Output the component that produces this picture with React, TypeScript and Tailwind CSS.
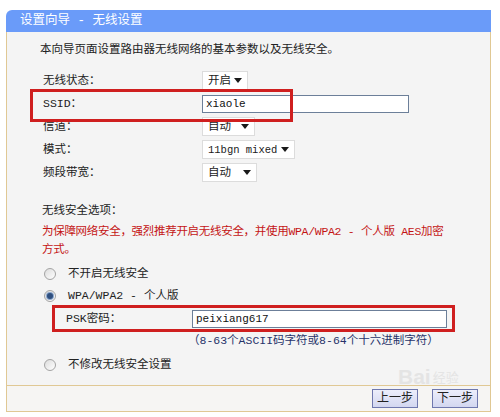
import type { ReactNode } from "react";

const FONT = "font-['Liberation_Mono','Noto_Sans_CJK_SC',monospace]";

const Arrow = () => (
  <svg width="8" height="5" viewBox="0 0 8 5" aria-hidden="true">
    <path d="M0 0h8L4 5z" fill="#1a1a1a" />
  </svg>
);

const FakeSelect = ({ value, className }: { value: string; className: string }) => (
  <div
    className={`flex h-[19px] items-center justify-between border border-[#dcdcdc] bg-white pl-[5px] pr-[5px] text-[#1a1a1a] ${className}`}>
    <span>{value}</span>
    <Arrow />
  </div>
);

const Radio = ({ checked = false }: { checked?: boolean }) => (
  <span className="flex h-[12px] w-[12px] items-center justify-center rounded-full border border-[#a3a3a3] bg-gradient-to-br from-[#dcdcdc] to-[#ffffff]">
    {checked ? (
      <span className="h-[6px] w-[6px] rounded-full bg-[#2f4f7f] ring-1 ring-[#8aa6cc]" />
    ) : null}
  </span>
);

const Row = ({ label, children }: { label: string; children: ReactNode }) => (
  <div className="flex h-[23px] items-center">
    <div className="w-[162px] pl-[3px] text-[#222]">{label}</div>
    {children}
  </div>
);

const RadioRow = ({ label, checked }: { label: string; checked?: boolean }) => (
  <div className="flex h-[22px] items-center pl-[4px]">
    <Radio checked={checked} />
    <span className="ml-[12px] text-[#222]">{label}</span>
  </div>
);

const WizardButton = ({ children }: { children: ReactNode }) => (
  <button
    type="button"
    className="flex h-[19px] w-[46px] items-center justify-center border border-[#6f78ae] bg-gradient-to-b from-[#eceefb] to-[#d3d7f0] text-[12px] text-[#222]">
    {children}
  </button>
);

export default function App() {
  return (
    <div className={`relative h-[417px] w-[500px] overflow-hidden bg-white pt-[10px] text-[11.5px] leading-[18px] ${FONT}`}>
      <div className="ml-[6px] w-[485px]">
        {/* title bar */}
        <div className="flex h-[22px] items-center rounded-tl-[6px] bg-[#6a9bf9] pl-[14px] text-[12.5px] text-white">
          设置向导 - 无线设置
        </div>

        {/* body */}
        <div className="h-[353px] border-x border-[#e0c894] bg-[#f4f4f4] pl-[33px] pt-[9px]">
          <div className="h-[18px] text-[#222]">本向导页面设置路由器无线网络的基本参数以及无线安全。</div>

          <div className="mt-[10px]">
            <Row label="无线状态：">
              <FakeSelect value="开启" className="w-[46px]" />
            </Row>
            <Row label="SSID：">
              <input
                readOnly
                defaultValue="xiaole"
                className="h-[18px] w-[207px] border border-[#6c7f99] bg-white pl-[3px] text-[11px] text-[#111] outline-none"
              />
            </Row>
            <Row label="信道：">
              <FakeSelect value="自动" className="w-[53px]" />
            </Row>
            <Row label="模式：">
              <FakeSelect value="11bgn mixed" className="w-[93px] text-[10.5px]" />
            </Row>
            <Row label="频段带宽：">
              <FakeSelect value="自动" className="w-[55px]" />
            </Row>
          </div>

          <div className="mt-[18px] h-[18px] pl-[2px] text-[#222]">无线安全选项：</div>
          <div className="mt-[3px] pl-[2px] tracking-[-0.3px] text-[#c41414]">
            为保障网络安全，强烈推荐开启无线安全，并使用WPA/WPA2 - 个人版 AES加密
            <br />
            方式。
          </div>

          <div className="mt-[4px]">
            <RadioRow label="不开启无线安全" />
            <RadioRow label="WPA/WPA2 - 个人版" checked />
          </div>

          <div className="-mt-[2px] ml-[12px] flex h-[27px] w-[403px] items-center border-[3px] border-[#cf1f1f] pl-[11px]">
            <div className="w-[126px] text-[#222]">PSK密码：</div>
            <input
              readOnly
              defaultValue="peixiang617"
              className="h-[18px] w-[255px] border border-[#6c7f99] bg-white pl-[3px] text-[11px] text-[#111] outline-none"
            />
          </div>
          <div className="h-[18px] pl-[148px] text-[#27336a]">（8-63个ASCII码字符或8-64个十六进制字符）</div>

          <div className="mt-[4px]">
            <RadioRow label="不修改无线安全设置" />
          </div>
        </div>

        {/* footer */}
        <div className="flex h-[27px] items-center justify-end gap-[14px] border border-[#e0c894] bg-[#f6f5f3] pr-[12px]">
          <WizardButton>上一步</WizardButton>
          <WizardButton>下一步</WizardButton>
        </div>
      </div>

      {/* annotation box around SSID */}
      <div className="pointer-events-none absolute left-[30px] top-[89px] h-[33px] w-[263px] border-[3px] border-[#cf1f1f]" />

      {/* watermark */}
      <div className="pointer-events-none absolute left-[398px] top-[366px] flex items-end gap-[2px] text-[#e4e4e4]">
        <span className="font-['Liberation_Sans',sans-serif] text-[21px] font-bold leading-[22px]">Bai</span>
        <span className="text-[13px] leading-[18px]">经验</span>
      </div>
    </div>
  );
}
